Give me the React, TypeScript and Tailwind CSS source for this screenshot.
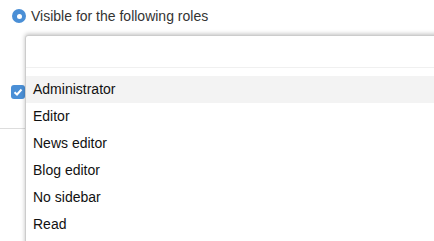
import React from "react";

export default function App() {
  const items = ["Administrator", "Editor", "News editor", "Blog editor", "No sidebar", "Read"];
  return (
    <div className="relative w-[434px] h-[241px] overflow-hidden bg-white" style={{ fontFamily: '"Liberation Sans", Arial, sans-serif' }}>
      <div className="flex flex-col">
        <div className="flex items-center h-[32px] pl-[12px] gap-[5px] text-[14px] text-[#333]">
          <span className="w-[14px] h-[14px] rounded-full bg-[#4a8fd6] flex items-center justify-center">
            <span className="w-[5px] h-[5px] rounded-full bg-white" />
          </span>
          <span>Visible for the following roles</span>
        </div>
        <div className="flex pl-[11px] pt-[53px] pb-[29px] border-b border-[#ddd] w-[30px] box-content">
          <span className="w-[14px] h-[14px] rounded-[3px] bg-[#4a8fd6] flex items-center justify-center shrink-0">
            <svg width="10" height="10" viewBox="0 0 10 10"><path d="M1.5 5.2 L4 7.5 L8.5 2.5" stroke="white" strokeWidth="2" fill="none" /></svg>
          </span>
        </div>
      </div>
      <div className="absolute left-[25px] top-[35px] w-[420px] h-[220px] bg-white border border-[#ccc] rounded-[3px] shadow-[0_-1px_4px_rgba(0,0,0,0.25)] flex flex-col">
        <div className="h-[32px] border-b border-[#f0f0f0]" />
        <div className="pt-[8px] flex flex-col">
          {items.map((t, i) => (
            <div key={t} className={`h-[27px] flex items-center pl-[7px] text-[14px] text-[#111] ${i === 0 ? "bg-[#f3f3f3]" : ""}`}>{t}</div>
          ))}
        </div>
      </div>
    </div>
  );
}
